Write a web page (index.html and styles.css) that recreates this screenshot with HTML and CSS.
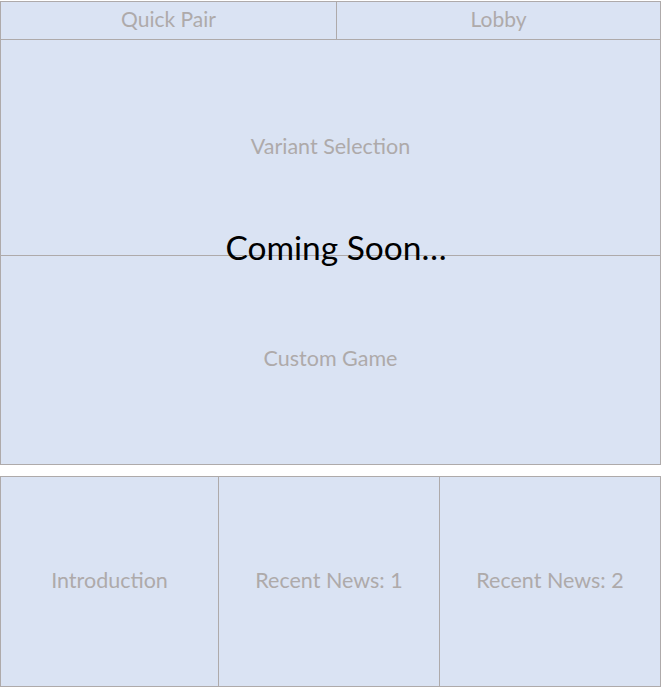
FILE: index.html
```html
<!DOCTYPE html>
<html>
<head>
<meta charset="utf-8">
<link rel="stylesheet" href="styles.css">
</head>
<body>
<div class="page">
  <section class="main">
    <div class="tabs">
      <div class="tab">Quick Pair</div>
      <div class="tab">Lobby</div>
    </div>
    <div class="panel">Variant Selection</div>
    <div class="panel">Custom Game</div>
    <div class="overlay">Coming Soon…</div>
  </section>
  <section class="cards">
    <div class="card">Introduction</div>
    <div class="card">Recent News: 1</div>
    <div class="card">Recent News: 2</div>
  </section>
</div>
</body>
</html>
```
FILE: styles.css
```css
html, body {
  margin: 0;
  padding: 0;
  background: #ffffff;
}
body {
  font-family: Lato, "Open Sans", sans-serif;
}
.page {
  padding-top: 1px;
  width: 661px;
  display: flex;
  flex-direction: column;
  gap: 11px;
}
.main {
  position: relative;
  box-sizing: border-box;
  height: 464px;
  border: 1px solid #aeaaaa;
  background: #dae3f3;
  display: grid;
  grid-template-rows: 38px 215px 1fr;
}
.tabs {
  display: grid;
  grid-template-columns: 335px 1fr;
  border-bottom: 1px solid #aeaaaa;
}
.tab,
.panel,
.card {
  display: flex;
  align-items: center;
  justify-content: center;
  color: #aeaaaa;
  font-size: 21.5px;
  padding-bottom: 4px;
}
.tab {
  font-size: 21px;
}
.tab + .tab {
  border-left: 1px solid #aeaaaa;
}
.panel + .panel {
  border-top: 1px solid #aeaaaa;
}
.overlay {
  position: absolute;
  left: 0;
  right: 0;
  top: 225px;
  padding-left: 11px;
  text-align: center;
  font-size: 33.5px;
  color: #000000;
  line-height: 40px;
}
.cards {
  box-sizing: border-box;
  height: 211px;
  border: 1px solid #aeaaaa;
  background: #dae3f3;
  display: grid;
  grid-template-columns: 217px 221px 1fr;
}
.card + .card {
  border-left: 1px solid #aeaaaa;
}
```
